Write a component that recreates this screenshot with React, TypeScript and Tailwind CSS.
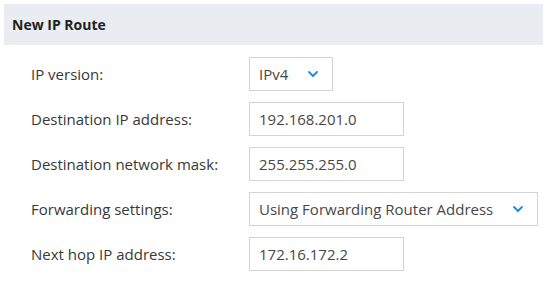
import { ChevronDown } from 'lucide-react';

const rows = [
  { label: 'IP version:', value: 'IPv4', kind: 'select', width: 'w-[84px]' },
  { label: 'Destination IP address:', value: '192.168.201.0', kind: 'input', width: 'w-[155px]' },
  { label: 'Destination network mask:', value: '255.255.255.0', kind: 'input', width: 'w-[155px]' },
  { label: 'Forwarding settings:', value: 'Using Forwarding Router Address', kind: 'select', width: 'w-[289px]' },
  { label: 'Next hop IP address:', value: '172.16.172.2', kind: 'input', width: 'w-[155px]' },
];

export default function App() {
  return (
    <div className="w-[549px] h-[288px] bg-white px-1 pt-1 font-['Open_Sans',sans-serif] text-[15px]">
      {/* Panel header */}
      <div className="h-[41px] w-[539px] bg-[#e9ecf0] flex items-center pl-2 font-bold text-[14px] text-[#222]">
        New IP Route
      </div>

      <div className="pl-[27px] pt-3 flex flex-col gap-[11px]">
        {rows.map((row) => (
          <div key={row.label} className="flex items-center">
            <div className="w-[218px] text-[#383838]">{row.label}</div>
            <div
              className={`${row.width} h-[34px] border border-[#d4d4d4] flex items-center justify-between pl-[9px] pr-[11px] text-[#474747]`}
            >
              <span>{row.value}</span>
              {row.kind === 'select' && (
                <ChevronDown className="w-4 h-4 text-[#1a8ae0]" strokeWidth={2.75} />
              )}
            </div>
          </div>
        ))}
      </div>
    </div>
  );
}
